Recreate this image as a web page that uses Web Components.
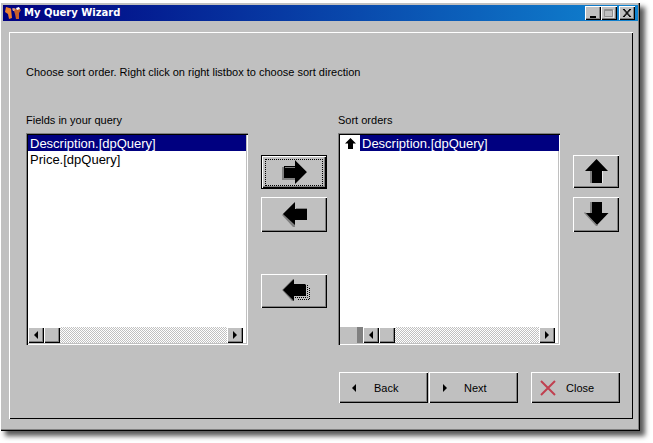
<!DOCTYPE html>
<html><head><meta charset="utf-8"><style>
html,body{margin:0;padding:0;background:#fff;width:653px;height:443px;overflow:hidden}
</style></head><body>
<wizard-window title-text="My Query Wizard"></wizard-window>
<script>
const ARROWS={
right:'<path d="M0 7h14v13H0z" fill="#808080"/><path d="M2 6h12v12H2z" fill="#000"/><path d="M3 7.500h10" stroke="#808080"/><path d="M13 0l12 12-12 12z" fill="#000"/><path d="M13.500 .5L25 12" stroke="#808080" fill="none"/>',
left:'<path d="M12 1L0 13l11 12h2z" fill="#808080"/><path d="M13 0L1 12l12 11z" fill="#000"/><path d="M12 7h13v11H12z" fill="#000"/><path d="M14 6.500h11" stroke="#808080"/>',
stack:'<path d="M11 0L0 11l10 11h2z" fill="#808080"/><path d="M12 0L1 11l11 11z" fill="#000"/><path d="M11 5h12l1 1v11H11z" fill="#000"/><path d="M25.500 6v12.500H12M27.500 9v11.500H15" stroke="#000" stroke-dasharray="1 1" fill="none"/>',
up:'<path d="M12.500 0L1 12h5v12h12V12h6z" fill="#000"/><path d="M6 12h2v12H6z" fill="#808080"/><path d="M18.500 12v12" stroke="#e8e8e8"/>',
down:'<path d="M6 0h12v11h6.500L13 23 1 11h5z" fill="#000"/><path d="M6 0h2v11H6z" fill="#808080"/><path d="M0 11l12 13h2L1 10z" fill="#808080"/>'
};
function def(name,css,html){
  customElements.define(name,class extends HTMLElement{
    constructor(){super();const r=this.attachShadow({mode:'open'});r.innerHTML='<style>'+css+'</style>'+(typeof html==='function'?html(this):html);}
  });
}
const bevel=`background:#c0c0c0;box-sizing:border-box;box-shadow:inset 1px 1px 0 #fff,inset -1px -1px 0 #000,inset -2px -2px 0 #808080;`;
def('cap-btn',`:host{display:flex;width:16px;height:14px;${bevel}align-items:center;justify-content:center}svg{display:block}`,
 el=>{const k=el.getAttribute('kind');const p={min:'<path d="M3 8h6v2H3z" fill="#000"/>',max:'<path d="M1.500 1.500h8v7h-8z M1.500 2.500h8" fill="none" stroke="#8f8f8f"/><path d="M10.500 2v8H2" stroke="#e8e8e8" fill="none"/>',close:'<path d="M2 1l7 8M3 1l7 8M9 1l-7 8M10 1l-7 8" stroke="#000" fill="none"/>'}[k];return `<svg width="12" height="10" viewBox="0 0 12 10">${p}</svg>`});
def('title-bar',`:host{display:flex;align-items:center;height:16px;box-sizing:border-box;padding:0 3px 0 0;background:linear-gradient(90deg,#000080,#1084d0);color:#fff;font:bold 10px "DejaVu Sans",sans-serif}
 span{margin:0 0 2px 3px;flex:1;white-space:nowrap}.g{display:flex}.x{margin-left:2px}svg{display:block;flex:none}`,
 `<svg width="18" height="16" viewBox="0 0 18 16"><path d="M3 2l5 1.500L9 13l-3 1-1-5-3-2z" fill="#ee8030"/><path d="M9 3.500L11 3l2 1-1 2H10z" fill="#e0a080"/><path d="M11 6l2-2 3-1 2 2-2 3v6h-3l-1-5z" fill="#c8602a"/><path d="M13 3l3-1 1 2-3 1z" fill="#fff"/></svg><span><slot></slot></span><div class="g"><cap-btn kind="min"></cap-btn><cap-btn kind="max"></cap-btn><cap-btn kind="close" class="x"></cap-btn></div>`);
def('tool-btn',`:host{display:flex;align-items:center;justify-content:center;box-sizing:border-box;position:relative;${bevel}}
 :host([default]){box-shadow:inset 0 0 0 1px #000,inset 2px 2px 0 #fff,inset -2px -2px 0 #000,inset -3px -3px 0 #808080}
 .f{display:none;position:absolute;inset:4px 4px 3px 4px;border:1px dotted #000}:host([default]) .f{display:block}svg{display:block;overflow:visible}`,
 el=>{const i=el.getAttribute('icon');return `<div class="f"></div><svg width="25" height="25" viewBox="0 0 25 25">${ARROWS[i]}</svg>`});
def('nav-btn',`:host{display:flex;align-items:center;box-sizing:border-box;width:89px;height:31px;${bevel}font:11px "Liberation Sans",sans-serif;color:#000}svg{display:block;margin-left:var(--il,13px)}span{margin-left:var(--tl,17px)}`,
 el=>{const k=el.getAttribute('icon');const s={back:'<svg width="5" height="8" viewBox="0 0 5 8"><path d="M4 0v8L0 4z"/></svg>',next:'<svg width="5" height="8" viewBox="0 0 5 8"><path d="M1 0v8l4-4z"/></svg>',close:'<svg width="16" height="16" viewBox="0 0 16 16"><path d="M1 1l14 14M15 1L1 15" stroke="#c04050" stroke-width="2" fill="none"/></svg>'}[k];return s+'<span><slot></slot></span>'});
def('scroll-btn',`:host{display:flex;align-items:center;justify-content:center;width:16px;height:16px;${bevel}}svg{display:block}`,
 el=>el.getAttribute('dir')==='l'?'<svg width="4" height="8" viewBox="0 0 4 8"><path d="M4 0v8L0 4z"/></svg>':'<svg width="4" height="8" viewBox="0 0 4 8"><path d="M0 0v8l4-4z"/></svg>');
def('h-scroll',`:host{display:flex;height:16px;flex:none}.t{flex:1;background:repeating-conic-gradient(#c0c0c0 0 25%,#fff 0 50%) 0 0/2px 2px}.gap{width:17px;background:#c0c0c0}.d{width:6px;background:#808080}.th{width:16px;height:16px;${bevel}}`,
 el=>(el.hasAttribute('header')?'<div class="gap"></div><div class="d"></div>':'')+'<scroll-btn dir="l"></scroll-btn><div class="th"></div><div class="t"></div><scroll-btn dir="r"></scroll-btn>');
def('list-box',`:host{display:flex;flex-direction:column;box-sizing:border-box;width:222px;height:212px;background:#fff;box-shadow:inset 1px 1px 0 #808080,inset 2px 2px 0 #000,inset -1px -1px 0 #fff,inset -2px -2px 0 #c0c0c0;padding:2px 5px 2px 2px;font:13px "Liberation Sans",sans-serif;color:#000}
 .l{flex:1;margin-right:-3px;min-height:0}:host([header]) .l{margin-right:-4px}`,
 el=>`<div class="l"><slot></slot></div><h-scroll ${el.hasAttribute('header')?'header':''}></h-scroll>`);
def('list-row',`:host{display:flex;height:16px;align-items:center;white-space:nowrap}.t{flex:1;padding-left:2px;height:16px;line-height:17px}:host([selected]) .t{background:#000080;color:#fff}.i{width:20px;height:16px;flex:none;display:none;align-items:center;justify-content:center}:host([arrow]) .i{display:flex}`,
 `<div class="i"><svg width="11" height="11" viewBox="0 0 11 11"><path d="M5.500 0L11 5.500H8V11H3V5.500H0z"/></svg></div><div class="t"><slot></slot></div>`);
def('field-col',`:host{display:flex;flex-direction:column;width:222px;font:11px "Liberation Sans",sans-serif}.c{height:24px;white-space:nowrap;line-height:13px;padding-top:5px;box-sizing:border-box}`,`<div class="c"><slot name="cap"></slot></div><slot></slot>`);
def('wizard-window',`:host{display:block;position:relative;box-sizing:border-box;width:640px;height:429px;margin:2px 0 0 0;padding:3px 2px 0 3px;background:#c0c0c0;box-shadow:inset 1px 1px 0 #fff,inset -1px -1px 0 #000,inset -2px -2px 0 #808080,5px 5px 5px rgba(0,0,0,.65)}
 .p{box-sizing:border-box;width:624px;height:387px;margin:11px 0 0 6px;box-shadow:inset 1px 1px 0 #fff,inset -1px -1px 0 #000;padding:34px 0 0 17px;font:11px "Liberation Sans",sans-serif}
 .ins{height:43px;white-space:nowrap;line-height:13px}
 .row{display:flex}
 .mid{display:flex;flex-direction:column;width:66px;margin:46px 11px 0 13px}
 .mid tool-btn{height:34px;margin-bottom:8px}
 .mid tool-btn+tool-btn{height:35px}.mid tool-btn.gap{margin-top:34px;height:34px}
 .side{display:flex;flex-direction:column;margin:46px 0 0 13px}.side tool-btn{width:46px;height:33px;margin-bottom:9px}.side tool-btn+tool-btn{height:35px}
 .foot{display:flex;margin:27px 0 0 313px}.foot nav-btn+nav-btn{margin-left:1px}.foot nav-btn.c{margin-left:13px;--il:9px;--tl:10px}`,
 el=>`<title-bar>My Query Wizard</title-bar><div class="p"><div class="ins">Choose sort order. Right click on right listbox to choose sort direction</div>
 <div class="row"><field-col><span slot="cap">Fields in your query</span><list-box><list-row selected>Description.[dpQuery]</list-row><list-row>Price.[dpQuery]</list-row></list-box></field-col>
 <div class="mid"><tool-btn icon="right" default></tool-btn><tool-btn icon="left"></tool-btn><tool-btn class="gap" icon="stack"></tool-btn></div>
 <field-col><span slot="cap">Sort orders</span><list-box header><list-row selected arrow>Description.[dpQuery]</list-row></list-box></field-col>
 <div class="side"><tool-btn icon="up"></tool-btn><tool-btn icon="down"></tool-btn></div></div>
 <div class="foot"><nav-btn icon="back">Back</nav-btn><nav-btn icon="next">Next</nav-btn><nav-btn class="c" icon="close">Close</nav-btn></div></div>`);
</script>
</body></html>
